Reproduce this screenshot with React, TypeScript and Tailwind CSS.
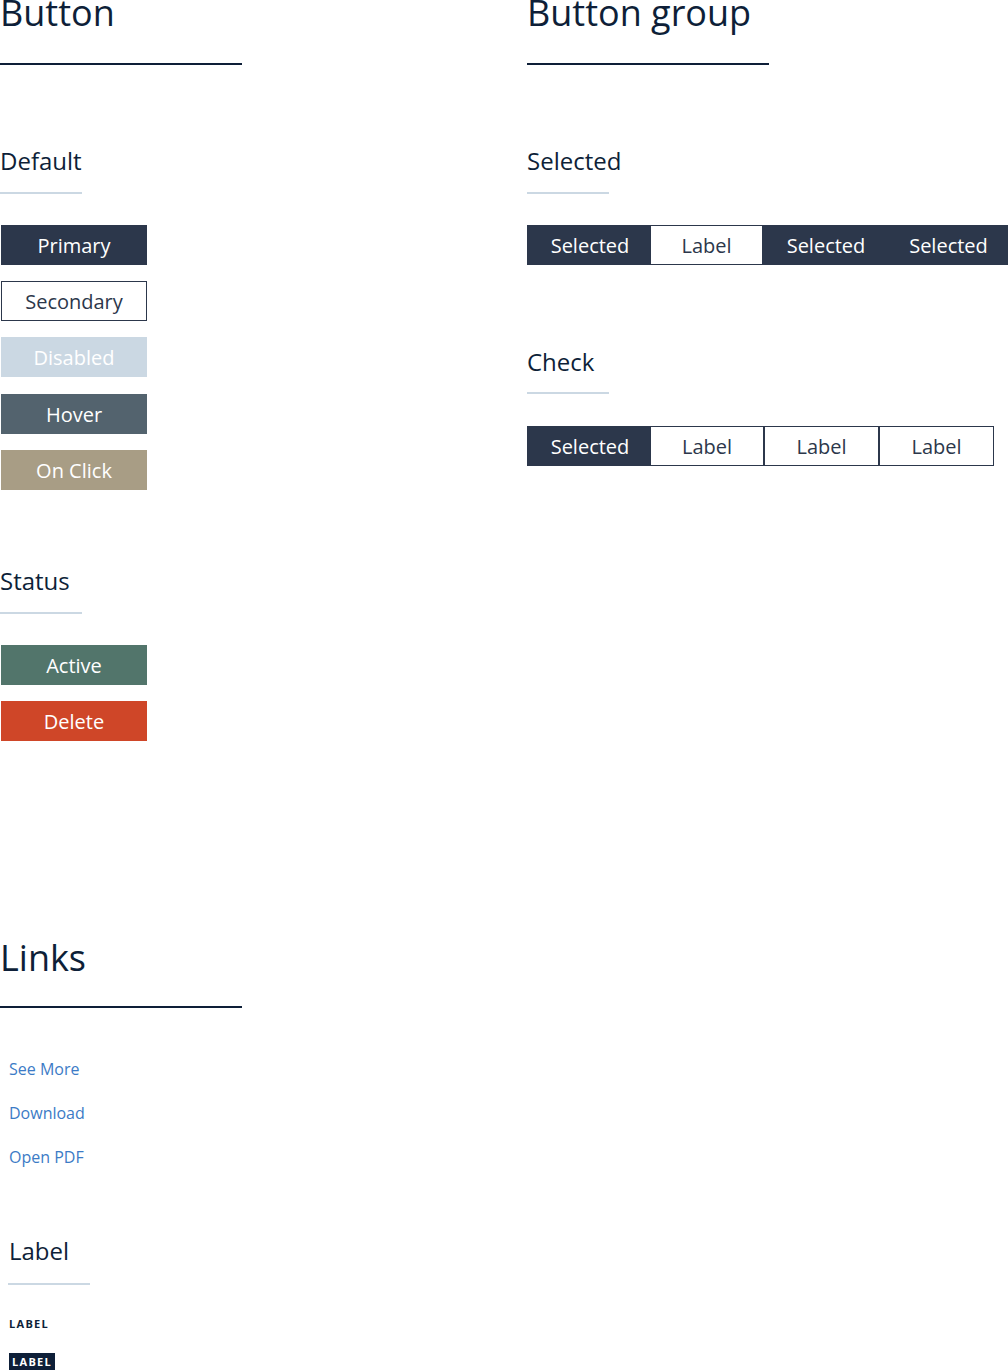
import React from "react";

const font = { fontFamily: '"Open Sans", "Liberation Sans", sans-serif' };

function BigHeading({ children, pb = "pb-[32px]" }: { children: React.ReactNode; pb?: string }) {
  return (
    <div className={`w-[242px] border-b-2 border-[#0e1f38] ${pb}`}>
      <div className="mt-[-5px] text-[36px] leading-[36px] text-[#0e1f38] whitespace-nowrap">{children}</div>
    </div>
  );
}

function SubHeading({ children, pb = "pb-[14px]" }: { children: React.ReactNode; pb?: string }) {
  return (
    <div className={`w-[82px] border-b-2 border-[#cbd8e3] ${pb}`}>
      <div className="text-[24px] leading-[32px] text-[#0e1f38] whitespace-nowrap">{children}</div>
    </div>
  );
}

function Btn({ label, cls }: { label: string; cls: string }) {
  return (
    <div className={`ml-px w-[146px] h-[40px] pt-[2px] flex items-center justify-center text-[20px] leading-none ${cls}`}>
      {label}
    </div>
  );
}

const seg = "shrink-0 pt-[2px] flex items-center justify-center";

export default function App() {
  return (
    <div className="w-[1008px] h-[1370px] overflow-hidden bg-white" style={font}>
      <div className="flex">
        {/* Left column */}
        <div className="w-[527px] shrink-0 flex flex-col">
          <BigHeading>Button</BigHeading>
          <div className="mt-[80px]">
            <SubHeading pb="pb-[15px]">Default</SubHeading>
          </div>
          <div className="mt-[31px] flex flex-col">
            <Btn label="Primary" cls="bg-[#2c374b] text-white" />
            <div className="mt-[16px]">
              <Btn label="Secondary" cls="bg-white border border-[#2c374b] text-[#2c374b]" />
            </div>
            <div className="mt-[16px]">
              <Btn label="Disabled" cls="bg-[#cbd8e3] text-white" />
            </div>
            <div className="mt-[17px]">
              <Btn label="Hover" cls="bg-[#53636e] text-white" />
            </div>
            <div className="mt-[16px]">
              <Btn label="On Click" cls="bg-[#a89d85] text-white" />
            </div>
          </div>
          <div className="mt-[75px]">
            <SubHeading pb="pb-[15px]">Status</SubHeading>
          </div>
          <div className="mt-[31px] flex flex-col">
            <Btn label="Active" cls="bg-[#52756b] text-white" />
            <div className="mt-[16px]">
              <Btn label="Delete" cls="bg-[#cf4628] text-white" />
            </div>
          </div>
        </div>

        {/* Right column */}
        <div className="flex-1 flex flex-col">
          <BigHeading>Button group</BigHeading>
          <div className="mt-[80px]">
            <SubHeading pb="pb-[15px]">Selected</SubHeading>
          </div>
          <div className="mt-[31px] flex h-[40px] text-[20px] leading-none">
            <div className={`w-[123px] pl-[3px] bg-[#2c374b] text-white ${seg}`}>Selected</div>
            <div className={`w-[113px] bg-white border border-[#2c374b] text-[#2c374b] ${seg}`}>Label</div>
            <div className={`w-[123px] pl-[3px] bg-[#2c374b] text-white ${seg}`}>Selected</div>
            <div className={`w-[122px] pl-[3px] bg-[#2c374b] text-white ${seg}`}>Selected</div>
          </div>
          <div className="mt-[81px]">
            <SubHeading>Check</SubHeading>
          </div>
          <div className="mt-[32px] flex h-[40px] text-[20px] leading-none">
            <div className={`w-[123px] pl-[3px] bg-[#2c374b] text-white ${seg}`}>Selected</div>
            <div className={`w-[114px] bg-white border border-[#2c374b] text-[#2c374b] ${seg}`}>Label</div>
            <div className={`w-[115px] bg-white border border-[#2c374b] text-[#2c374b] ${seg}`}>Label</div>
            <div className={`w-[115px] bg-white border border-[#2c374b] text-[#2c374b] ${seg}`}>Label</div>
          </div>
        </div>
      </div>

      {/* Links section */}
      <div className="mt-[204px] flex flex-col">
        <BigHeading pb="pb-[30px]">Links</BigHeading>
        <div className="mt-[49px] ml-[9px] flex flex-col gap-[20px] text-[16px] leading-[24px] text-[#3c7bc6]">
          <a className="w-fit">See More</a>
          <a className="w-fit">Download</a>
          <a className="w-fit">Open PDF</a>
        </div>
        <div className="mt-[66px] ml-[8px]">
          <SubHeading pb="pb-[16px]">
            <span className="ml-px">Label</span>
          </SubHeading>
        </div>
        <div className="mt-[31px] ml-[9px] text-[11px] leading-[16px] font-bold tracking-[1.3px] text-[#0e1f38]">LABEL</div>
        <div className="mt-[21px] ml-[9px] w-fit bg-[#0e1f38] px-[3px] text-[11px] leading-[18px] font-bold tracking-[1.3px] text-white">
          LABEL
        </div>
      </div>
    </div>
  );
}
